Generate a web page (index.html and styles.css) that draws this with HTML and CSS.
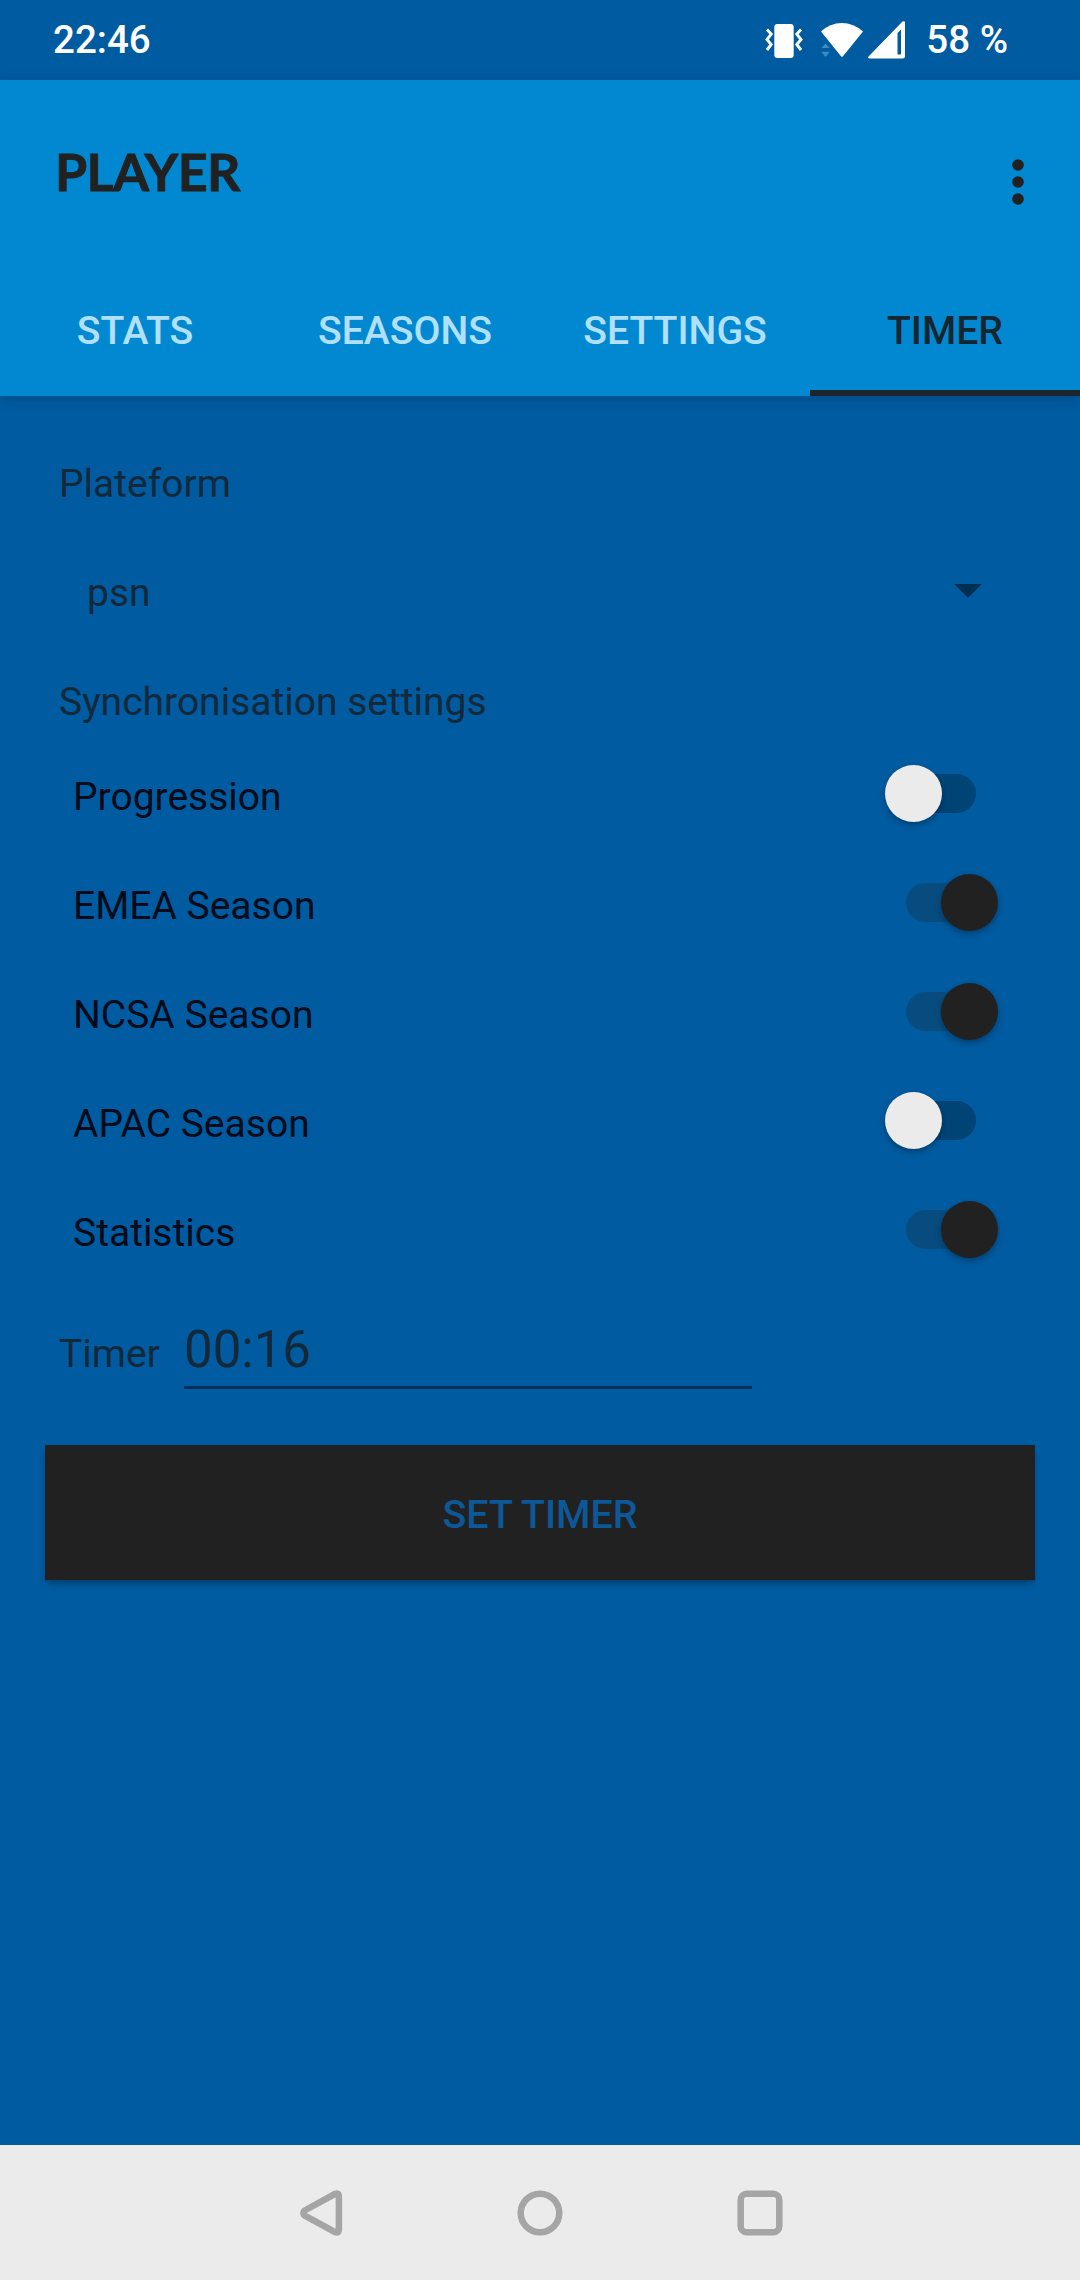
FILE: index.html
```html
<!DOCTYPE html>
<html lang="en">
<head>
<meta charset="utf-8">
<title>Player</title>
<link rel="stylesheet" href="styles.css">
</head>
<body>
<div class="screen">
  <div class="status-bar">
    <span class="clock">22:46</span>
    <div class="status-icons">
      <svg class="vibrate" width="38" height="36" viewBox="0 0 38 36">
        <rect x="9.3" y="1" width="19.4" height="34" rx="3" fill="#fff"/>
        <path d="M2 6.5l4.2 4.6-4.2 5.4 4.2 5-4.2 5.500M36 6.500l-4.200 4.600 4.200 5.400-4.200 5 4.200 5.500" fill="none" stroke="#fff" stroke-width="2.900"/>
      </svg>
      <svg class="wifi" width="44" height="37" viewBox="0 0 44 37">
        <path d="M1 10.500Q10 2 21.800 2T43 10.500L23 35.200Q22 36.400 21 35.200Z" fill="#fff"/>
        <path d="M1.200 27L5.500 22.500 9.800 27ZM1.200 30.800L5.500 36 9.800 30.800Z" fill="#3d8ac4"/>
      </svg>
      <svg class="signal" width="39" height="39" viewBox="0 0 39 39">
        <path d="M1.500 36.500L35.500 1.600Q38 .4 38 2.500V36.500Q38 38.500 36 38.500H2.500Q.3 38.200 1.500 36.500ZM30.500 13V34.500H34V9.500Z" fill="#fff" fill-rule="evenodd"/>
      </svg>
      <span class="battery">58 %</span>
    </div>
  </div>

  <header class="app-bar">
    <div class="title-row">
      <h1 class="title">PLAYER</h1>
      <svg class="overflow" width="12" height="46" viewBox="0 0 12 46" fill="#212121">
        <circle cx="6" cy="6" r="5.800"/><circle cx="6" cy="23" r="5.800"/><circle cx="6" cy="40" r="5.800"/>
      </svg>
    </div>
    <nav class="tabs">
      <span class="tab">STATS</span>
      <span class="tab">SEASONS</span>
      <span class="tab">SETTINGS</span>
      <span class="tab active">TIMER</span>
    </nav>
  </header>

  <main class="content">
    <div class="label">Plateform</div>
    <div class="spinner">
      <span>psn</span>
      <svg class="caret" width="28" height="14" viewBox="0 0 28 14"><path d="M0 0H28L14 14Z" fill="#002f54"/></svg>
    </div>
    <div class="label section">Synchronisation settings</div>
    <div class="option"><span>Progression</span><div class="switch"><i class="thumb"></i></div></div>
    <div class="option"><span>EMEA Season</span><div class="switch on"><i class="thumb"></i></div></div>
    <div class="option"><span>NCSA Season</span><div class="switch on"><i class="thumb"></i></div></div>
    <div class="option"><span>APAC Season</span><div class="switch"><i class="thumb"></i></div></div>
    <div class="option"><span>Statistics</span><div class="switch on"><i class="thumb"></i></div></div>
    <div class="timer-row">
      <span class="timer-label">Timer</span>
      <span class="timer-field">00:16</span>
    </div>
    <div class="set-button">SET TIMER</div>
  </main>

  <footer class="nav-bar">
    <svg width="46" height="46" viewBox="-2.700 0 46 46"><path d="M5 20.500L35.500 3.800Q39.200 2.600 39.200 6.200V39.800Q39.200 43.400 35.500 42.200L5 25.500Q2.200 23 5 20.500Z"/></svg>
    <svg width="46" height="46" viewBox="0 0 46 46"><circle cx="23" cy="23" r="19.300"/></svg>
    <svg width="46" height="46" viewBox="0 0 46 46"><rect x="3.700" y="3.700" width="38.600" height="38.600" rx="6"/></svg>
  </footer>
</div>
</body>
</html>
```
FILE: styles.css
```css
* { box-sizing: border-box; }

body {
  margin: 0;
  font-family: Roboto, sans-serif;
  font-size: 39px;
  line-height: 46px;
  color: #13293a;
  background: #005ba0;
}

.screen {
  display: flex;
  flex-direction: column;
  width: 1080px;
  height: 2280px;
  overflow: hidden;
}

.status-bar {
  display: flex;
  justify-content: space-between;
  height: 80px;
  padding: 17px 72px 0 53px;
  font-weight: 500;
  font-size: 38.5px;
  color: #fff;
}

.status-icons { display: flex; align-items: flex-start; }
.vibrate { margin-top: 6px; }
.wifi { margin: 4px 0 0 17px; }
.signal { margin: 3px 0 0 3px; }
.battery { margin-left: 20px; }

.app-bar {
  display: flex;
  flex-direction: column;
  height: 316px;
  background: #0288d1;
  box-shadow: 0 3px 12px rgba(0, 0, 0, .17);
}

.title-row {
  display: flex;
  justify-content: space-between;
  height: 184px;
  padding: 59px 56px 0 55px;
}

.title {
  margin: 0;
  font-family: Lato, sans-serif;
  font-weight: 700;
  font-size: 52px;
  line-height: 64px;
  letter-spacing: -0.6px;
  color: #212121;
  -webkit-text-stroke: 0.8px #212121;
}

.overflow { margin-top: 20px; }

.tabs { display: flex; flex: 1; }

.tab {
  flex: 1;
  padding-top: 44px;
  text-align: center;
  font-weight: 500;
  font-size: 39.2px;
  color: #b0e0fb;
}

.tab.active {
  color: #14262f;
  border-bottom: 6px solid #1b252b;
}

.content {
  flex: 1;
  display: flex;
  flex-direction: column;
  padding-top: 33px;
}

.label {
  height: 109px;
  padding: 32px 59px 0;
}

.label.section { height: 95px; }

.spinner {
  display: flex;
  justify-content: space-between;
  align-items: center;
  height: 109px;
  padding: 0 98px 0 87px;
}

.caret { margin-bottom: 3px; }

.option {
  display: flex;
  justify-content: space-between;
  align-items: center;
  height: 109px;
  padding: 0 104px 0 73px;
  color: #000b1a;
}

.switch {
  position: relative;
  width: 70px;
  height: 39px;
  margin-bottom: 7px;
  border-radius: 20px;
  background: #004476;
}

.switch.on { background: #084c7f; }

.thumb {
  position: absolute;
  top: -9px;
  left: -21.5px;
  width: 57px;
  height: 57px;
  border-radius: 50%;
  background: #ebebeb;
  box-shadow: 0 3px 6px rgba(0, 0, 0, .3);
}

.switch.on .thumb {
  left: 34.5px;
  background: #212121;
}

.timer-row {
  display: flex;
  align-items: baseline;
  gap: 25px;
  padding: 33px 0 0 59px;
}

.timer-label { width: 100px; }

.timer-field {
  width: 568px;
  height: 69px;
  font-size: 51px;
  line-height: 60px;
  border-bottom: 3px solid #00305a;
}

.set-button {
  width: 990px;
  height: 135px;
  margin: 56px auto 0;
  text-align: center;
  line-height: 139px;
  font-weight: 500;
  font-size: 39.4px;
  color: #0c5898;
  background: #212121;
  box-shadow: 0 5px 7px -2px rgba(0, 0, 0, .35);
}

.nav-bar {
  display: flex;
  justify-content: center;
  align-items: center;
  gap: 174px;
  height: 135px;
  background: #ebebeb;
}

.nav-bar svg {
  fill: none;
  stroke: #a5a5a5;
  stroke-width: 6.5;
}
```
